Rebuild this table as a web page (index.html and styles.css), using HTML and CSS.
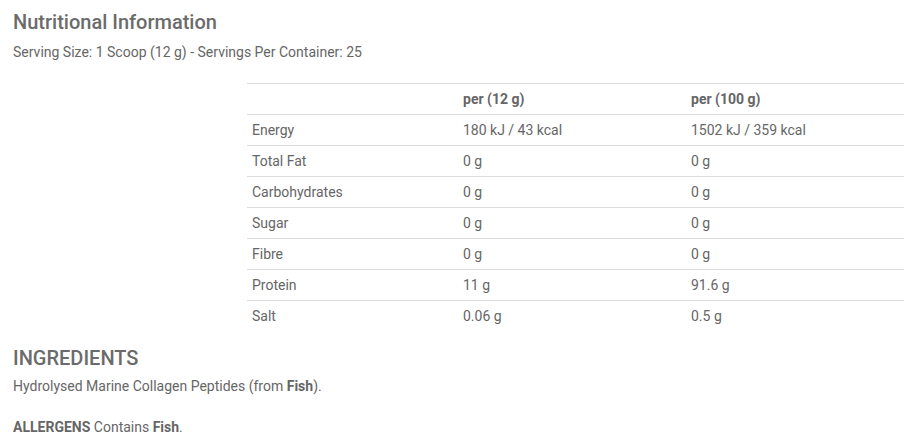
FILE: index.html
```html
<!DOCTYPE html>
<html>
<head>
<meta charset="utf-8">
<link rel="stylesheet" href="styles.css">
</head>
<body>
<div class="page">
  <h2 class="title">Nutritional Information</h2>
  <p class="serving">Serving Size: 1 Scoop (12 g) - Servings Per Container: 25</p>
  <table class="nutri">
    <colgroup><col class="c1"><col class="c2"><col class="c3"></colgroup>
    <thead>
      <tr><th></th><th>per (12 g)</th><th>per (100 g)</th></tr>
    </thead>
    <tbody>
      <tr><td>Energy</td><td>180 kJ / 43 kcal</td><td>1502 kJ / 359 kcal</td></tr>
      <tr><td>Total Fat</td><td>0 g</td><td>0 g</td></tr>
      <tr><td>Carbohydrates</td><td>0 g</td><td>0 g</td></tr>
      <tr><td>Sugar</td><td>0 g</td><td>0 g</td></tr>
      <tr><td>Fibre</td><td>0 g</td><td>0 g</td></tr>
      <tr><td>Protein</td><td>11 g</td><td>91.6 g</td></tr>
      <tr><td>Salt</td><td>0.06 g</td><td>0.5 g</td></tr>
    </tbody>
  </table>
  <h3 class="sub">INGREDIENTS</h3>
  <p class="text">Hydrolysed Marine Collagen Peptides (from <b>Fish</b>).</p>
  <p class="text allergens"><b>ALLERGENS</b> Contains <b>Fish</b>.</p>
</div>
</body>
</html>
```
FILE: styles.css
```css
html, body {
  margin: 0;
  padding: 0;
  background: #fff;
}
body {
  font-family: Roboto, "Liberation Sans", sans-serif;
  color: #666;
  font-size: 14px;
}
.page {
  padding: 9px 0 0 13px;
}
.title {
  margin: 0;
  font-size: 20px;
  font-weight: 500;
  line-height: 26px;
  color: #6b6b6b;
}
.serving {
  margin: 7px 0 0;
  line-height: 20px;
}
.nutri {
  margin: 21px 0 0 234px;
  width: 657px;
  border-collapse: collapse;
  table-layout: fixed;
}
.c1 { width: 211px; }
.c2 { width: 228px; }
.c3 { width: 218px; }
.nutri th, .nutri td {
  border-top: 1px solid #ddd;
  height: 30px;
  padding: 0 5px;
  text-align: left;
  vertical-align: middle;
  line-height: 20px;
}
.nutri th {
  font-weight: 700;
}
.sub {
  margin: 14px 0 0;
  font-size: 20px;
  font-weight: 500;
  line-height: 26px;
  color: #6b6b6b;
}
.text {
  margin: 5px 0 0;
  line-height: 20px;
}
.text b {
  font-weight: 700;
}
.allergens {
  margin-top: 21px;
}
```
